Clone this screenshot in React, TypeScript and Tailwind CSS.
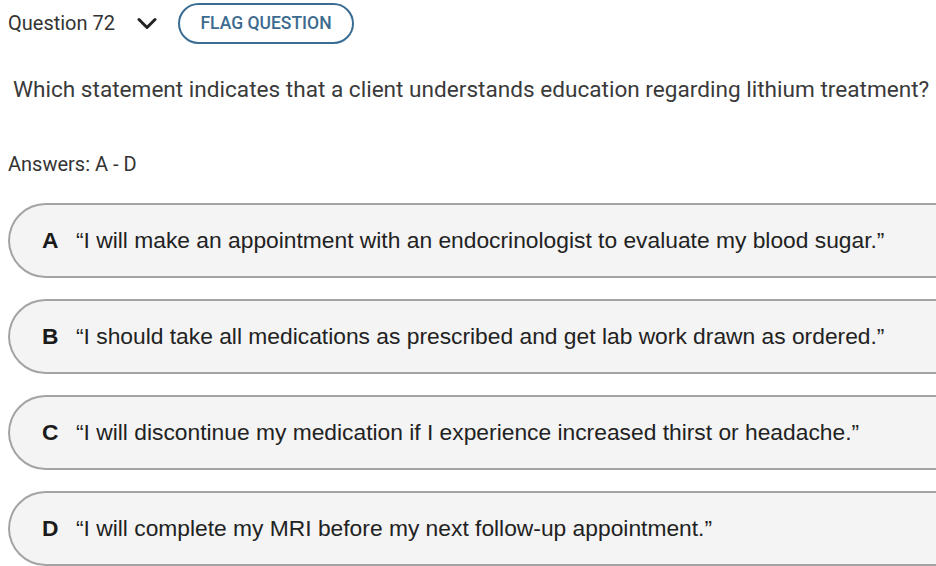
const answers = [
  { key: "A", text: "\u201CI will make an appointment with an endocrinologist to evaluate my blood sugar.\u201D" },
  { key: "B", text: "\u201CI should take all medications as prescribed and get lab work drawn as ordered.\u201D" },
  { key: "C", text: "\u201CI will discontinue my medication if I experience increased thirst or headache.\u201D" },
  { key: "D", text: "\u201CI will complete my MRI before my next follow-up appointment.\u201D" },
]

const Chevron = () => (
  <svg width="20" height="13" viewBox="0 0 20 13" className="ml-[22px] text-[#222]">
    <path d="M2 2.5 L10 10.5 L18 2.5" fill="none" stroke="currentColor" strokeWidth="3" strokeLinecap="round" strokeLinejoin="round" />
  </svg>
)

export default function App() {
  return (
    <div className="w-[936px] h-[566px] overflow-hidden bg-white text-[#333] font-['Roboto',sans-serif]">
      <div className="flex items-center h-[45px] pl-2 pt-px">
        <span className="text-[20px] text-[#333]">Question 72</span>
        <Chevron />
        <button className="ml-[21px] h-[41px] w-[176px] rounded-full border-2 border-[#3a6d94] text-[#3d6b90] text-[17.5px] font-medium uppercase">
          Flag Question
        </button>
      </div>

      <p className="pl-[13px] mt-[31px] text-[22.6px] leading-[28px] text-[#3a3a3a] whitespace-nowrap">
        Which statement indicates that a client understands education regarding lithium treatment?
      </p>

      <p className="pl-2 mt-[46px] text-[20px] leading-[28px] text-[#333]">Answers: A - D</p>

      <div className="mt-[25px] ml-2 -mr-12 flex flex-col gap-[21px]">
        {answers.map((a) => (
          <div
            key={a.key}
            className="h-[75px] flex items-center rounded-l-[38px] border-2 border-r-0 border-[#a3a3a3] bg-[#f4f4f4] pl-[32px] font-['Liberation_Sans',Arial,sans-serif] text-[22.8px] text-[#222]"
          >
            <span className="w-[34px] font-bold text-[#1a1a1a]">{a.key}</span>
            <span className="whitespace-nowrap">{a.text}</span>
          </div>
        ))}
      </div>
    </div>
  )
}
